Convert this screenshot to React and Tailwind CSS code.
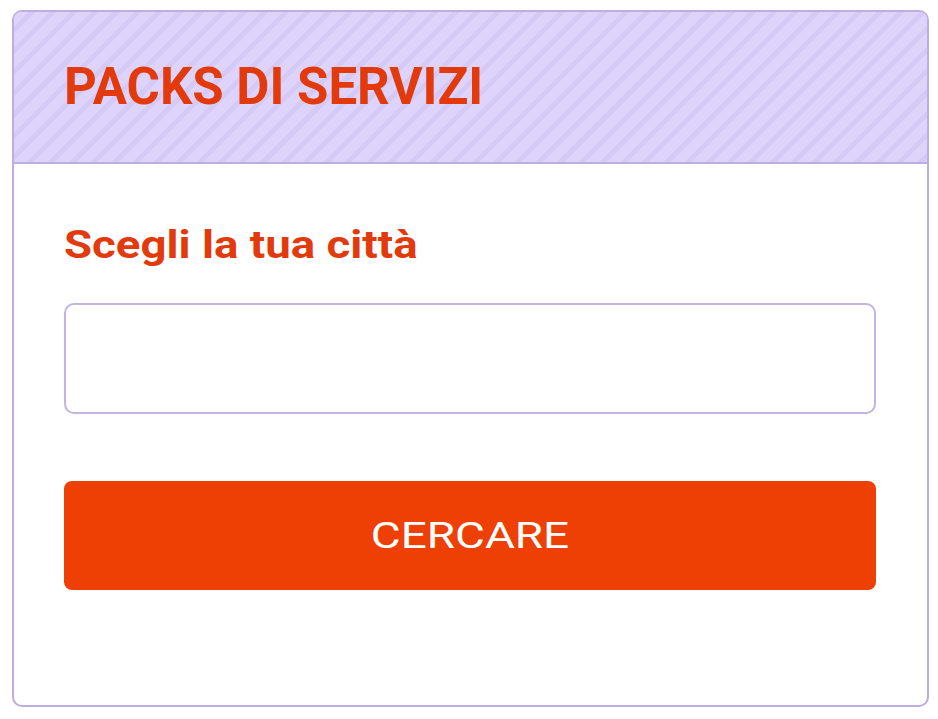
export default function App() {
  return (
    <div className="min-h-screen bg-white p-[10px_10px_12px_12px] font-['Roboto',sans-serif]">
      <div className="flex h-[697px] w-[917px] flex-col overflow-hidden rounded-[10px] border-2 border-[#bcaee0] bg-white">
        {/* header with striped band */}
        <div className="flex h-[152px] shrink-0 items-center border-b-2 border-[#bcaee0] bg-[#ddd3fb] bg-[repeating-linear-gradient(135deg,#ddd3fb_0px,#ddd3fb_10px,#d5c9f6_10px,#d5c9f6_15px)] pl-[50px]">
          <h2 className="origin-left scale-x-[0.98] whitespace-nowrap text-[52px] font-bold leading-none text-[#e23a0c]">
            PACKS DI SERVIZI
          </h2>
        </div>

        <div className="flex flex-col px-[50px] pt-[62px]">
          <label className="origin-left scale-x-[1.2] whitespace-nowrap text-[38px] font-bold leading-none text-[#e23a0c]">
            Scegli la tua città
          </label>
          <input
            type="text"
            className="mt-[39px] h-[111px] w-[812px] rounded-[10px] border-2 border-[#c2b4e4] bg-white px-4 text-2xl outline-none"
          />
          <button className="mt-[67px] flex h-[109px] w-[812px] items-center justify-center rounded-[8px] bg-[#ee3f04] text-[37px] leading-none text-white">
            <span className="scale-x-[1.24]">CERCARE</span>
          </button>
        </div>
      </div>
    </div>
  );
}
